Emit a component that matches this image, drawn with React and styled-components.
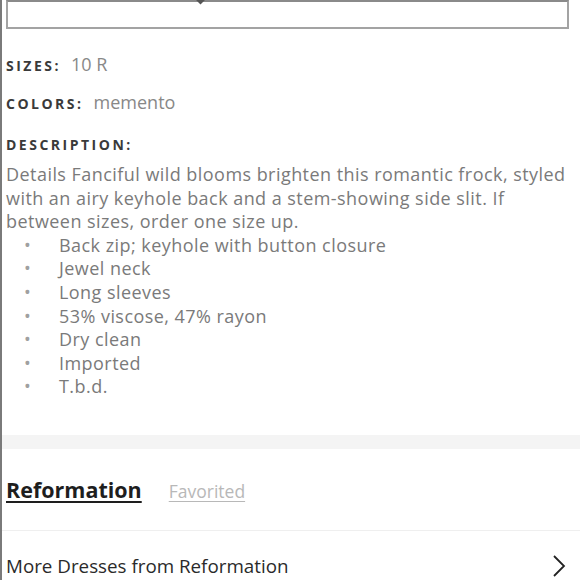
import React from 'react';
import styled, { createGlobalStyle } from 'styled-components';

const GlobalStyle = createGlobalStyle`
  html, body {
    margin: 0;
    padding: 0;
    background: #fff;
  }
  body {
    font-family: 'Open Sans', Lato, sans-serif;
    overflow: hidden;
  }
`;

const Page = styled.div`
  width: 580px;
  height: 580px;
  box-sizing: border-box;
  border-left: 2px solid #7a7a7a;
  overflow: hidden;
`;

const SelectBox = styled.div`
  position: relative;
  box-sizing: border-box;
  margin-left: 4px;
  width: 563px;
  height: 29px;
  border: 2px solid #a3a3a3;
  border-top-color: #8a8a8a;
`;

const Caret = styled.span`
  position: absolute;
  top: -6px;
  left: 189px;
  width: 7px;
  height: 7px;
  background: #555;
  transform: rotate(45deg);
`;

const Info = styled.div`
  padding: 0 0 0 4px;
`;

const Field = styled.div`
  display: flex;
  align-items: baseline;
  gap: 10px;
  line-height: 24px;
  margin-top: ${(p) => p.$top}px;
`;

const Label = styled.span`
  font-size: 14px;
  font-weight: 700;
  letter-spacing: 2.5px;
  color: #3a3a3a;
`;

const Value = styled.span`
  font-size: 18px;
  color: #888;
`;

const Paragraph = styled.p`
  margin: 6px 0 0;
  font-size: 18px;
  line-height: 23.6px;
  letter-spacing: 0.45px;
  color: #7a7a7a;
`;

const Bullets = styled.ul`
  list-style: none;
  margin: 0;
  padding: 0;
`;

const Bullet = styled.li`
  display: flex;
  font-size: 18px;
  line-height: 23.6px;
  letter-spacing: 0.45px;
  color: #7a7a7a;
  &::before {
    content: '•';
    width: 53px;
    padding-left: 18px;
    box-sizing: border-box;
    font-size: 18px;
    color: #a0a0a0;
  }
`;

const Band = styled.div`
  height: 14px;
  margin-top: 36px;
  background: #f4f4f4;
`;

const Tabs = styled.div`
  display: flex;
  align-items: center;
  gap: 27px;
  height: 81px;
  padding-left: 4px;
  border-bottom: 1px solid #efefef;
`;

const Brand = styled.a`
  font-size: 21.5px;
  font-weight: 700;
  color: #1e1e1e;
  text-decoration: underline;
  text-underline-offset: 3px;
`;

const Fav = styled.a`
  font-size: 17.5px;
  color: #b8b8b8;
  text-decoration: underline;
  text-underline-offset: 3px;
  margin-top: 4px;
`;

const MoreRow = styled.div`
  display: flex;
  align-items: center;
  justify-content: space-between;
  height: 70px;
  padding: 0 14px 0 4px;
  font-size: 18.8px;
  color: #2a2a2a;
`;

const Chevron = () => (
  <svg width="14" height="22" viewBox="0 0 14 22" fill="none">
    <path d="M2 1 L12 11 L2 21" stroke="#222" strokeWidth="1.8" />
  </svg>
);

const items = [
  'Back zip; keyhole with button closure',
  'Jewel neck',
  'Long sleeves',
  '53% viscose, 47% rayon',
  'Dry clean',
  'Imported',
  'T.b.d.',
];

export default function App() {
  return (
    <Page>
      <GlobalStyle />
      <SelectBox>
        <Caret />
      </SelectBox>
      <Info>
        <Field $top={23}>
          <Label>SIZES:</Label>
          <Value>10 R</Value>
        </Field>
        <Field $top={12}>
          <Label>COLORS:</Label>
          <Value>memento</Value>
        </Field>
        <Field $top={17}>
          <Label>DESCRIPTION:</Label>
        </Field>
        <Paragraph>
          Details Fanciful wild blooms brighten this romantic frock, styled with an airy keyhole
          back and a stem-showing side slit. If between sizes, order one size up.
        </Paragraph>
        <Bullets>
          {items.map((t) => (
            <Bullet key={t}>{t}</Bullet>
          ))}
        </Bullets>
      </Info>
      <Band />
      <Tabs>
        <Brand>Reformation</Brand>
        <Fav>Favorited</Fav>
      </Tabs>
      <MoreRow>
        <span>More Dresses from Reformation</span>
        <Chevron />
      </MoreRow>
    </Page>
  );
}
